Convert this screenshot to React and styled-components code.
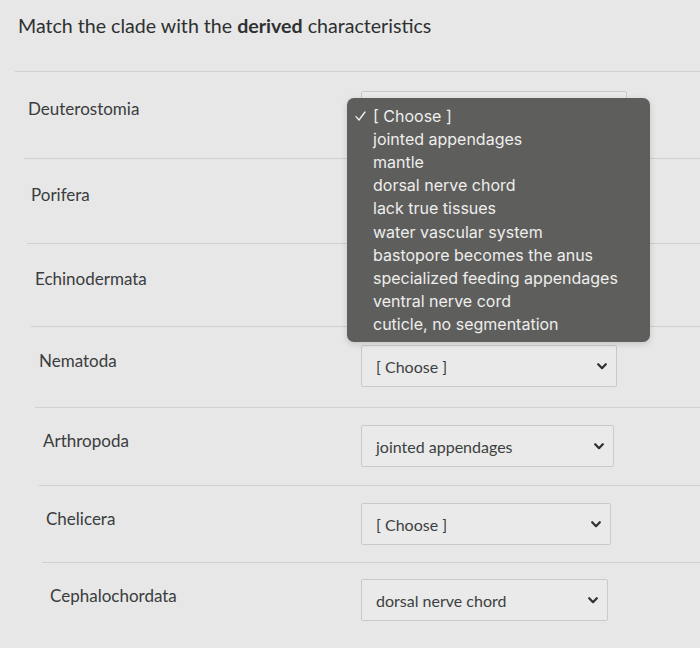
import React from "react";
import styled, { createGlobalStyle } from "styled-components";

const GlobalStyle = createGlobalStyle`
  html, body {
    margin: 0;
    padding: 0;
    background: #e6e7e6;
  }
  body {
    font-family: Lato, "Open Sans", sans-serif;
  }
`;

const Page = styled.div`
  width: 700px;
  height: 648px;
  overflow: hidden;
  background: #e6e7e6;
`;

const Header = styled.div`
  box-sizing: border-box;
  height: 72px;
  margin-left: 15px;
  padding: 14px 0 0 3px;
  border-bottom: 1px solid #cfd0cf;
`;

const Title = styled.h1`
  margin: 0;
  font-family: Lato, sans-serif;
  font-weight: 400;
  font-size: 19.6px;
  line-height: 24px;
  color: #2e3031;
  b {
    font-weight: 700;
  }
`;

const Row = styled.div`
  box-sizing: border-box;
  display: grid;
  grid-template-columns: ${(p) => 361 - p.$indent}px auto;
  align-items: start;
  height: ${(p) => p.$height}px;
  margin-left: ${(p) => p.$indent}px;
  padding-top: ${(p) => p.$top}px;
  border-bottom: ${(p) => (p.$last ? "none" : "1px solid #cfd0cf")};
`;

const Label = styled.div`
  padding-left: 4px;
  margin-top: ${(p) => p.$offset}px;
  font-size: 17px;
  line-height: 24px;
  color: #3a3c3d;
`;

const SelectCell = styled.div`
  position: relative;
`;

const SelectBox = styled.div`
  box-sizing: border-box;
  display: flex;
  align-items: center;
  justify-content: space-between;
  height: 42px;
  padding: 0 9px 0 14px;
  border: 1px solid #c9cac9;
  border-radius: 2px;
  background: #e9eae9;
  font-size: 16px;
  color: #3d3f40;
`;

const Chevron = styled.svg`
  width: 10px;
  height: 7px;
  flex: none;
`;

const Menu = styled.ul`
  position: absolute;
  left: -14px;
  top: 7px;
  z-index: 2;
  box-sizing: border-box;
  width: 303px;
  margin: 0;
  padding: 6px 0 6px 8px;
  list-style: none;
  background: #5e5e5c;
  border-radius: 7px;
  box-shadow: 0 2px 6px rgba(0, 0, 0, 0.15);
`;

const MenuItem = styled.li`
  display: flex;
  align-items: center;
  height: 23.2px;
  font-family: Inter, "Noto Sans", sans-serif;
  font-size: 16px;
  color: #eeeeec;
  white-space: nowrap;
`;

const CheckSlot = styled.span`
  display: flex;
  align-items: center;
  width: 18px;
  flex: none;
`;

const CheckIcon = styled.svg`
  width: 11px;
  height: 10px;
`;

const options = [
  "[ Choose ]",
  "jointed appendages",
  "mantle",
  "dorsal nerve chord",
  "lack true tissues",
  "water vascular system",
  "bastopore becomes the anus",
  "specialized feeding appendages",
  "ventral nerve cord",
  "cuticle, no segmentation",
];

const rows = [
  { label: "Deuterostomia", value: "", indent: 24, height: 87, top: 19, offset: 6, width: 266, open: true },
  { label: "Porifera", value: "", indent: 27, height: 85, top: 18, offset: 6, width: 263 },
  { label: "Echinodermata", value: "", indent: 31, height: 83, top: 18, offset: 5, width: 259 },
  { label: "Nematoda", value: "[ Choose ]", indent: 35, height: 81, top: 18, offset: 4, width: 256 },
  { label: "Arthropoda", value: "jointed appendages", indent: 39, height: 78, top: 17, offset: 4, width: 253 },
  { label: "Chelicera", value: "[ Choose ]", indent: 42, height: 77, top: 17, offset: 4, width: 250 },
  { label: "Cephalochordata", value: "dorsal nerve chord", indent: 46, height: 85, top: 16, offset: 5, width: 247, last: true },
];

function Select({ value, width, open }) {
  return (
    <SelectCell>
      <SelectBox style={{ width }}>
        <span>{value}</span>
        <Chevron viewBox="0 0 10 7">
          <path d="M1.2 1.2 L5 5.2 L8.8 1.2" fill="none" stroke="#2f3132" strokeWidth="2.2" strokeLinecap="round" strokeLinejoin="round" />
        </Chevron>
      </SelectBox>
      {open && (
        <Menu>
          {options.map((o, i) => (
            <MenuItem key={o}>
              <CheckSlot>
                {i === 0 && (
                  <CheckIcon viewBox="0 0 11 10">
                    <path d="M1 5.6 L4 9 L10 1" fill="none" stroke="#eeeeec" strokeWidth="1.4" strokeLinecap="round" strokeLinejoin="round" />
                  </CheckIcon>
                )}
              </CheckSlot>
              {o}
            </MenuItem>
          ))}
        </Menu>
      )}
    </SelectCell>
  );
}

export default function App() {
  return (
    <Page>
      <GlobalStyle />
      <Header>
        <Title>
          Match the clade with the <b>derived</b> characteristics
        </Title>
      </Header>
      {rows.map((r) => (
        <Row key={r.label} $indent={r.indent} $height={r.height} $top={r.top} $last={r.last}>
          <Label $offset={r.offset}>{r.label}</Label>
          <Select value={r.value} width={r.width} open={r.open} />
        </Row>
      ))}
    </Page>
  );
}
